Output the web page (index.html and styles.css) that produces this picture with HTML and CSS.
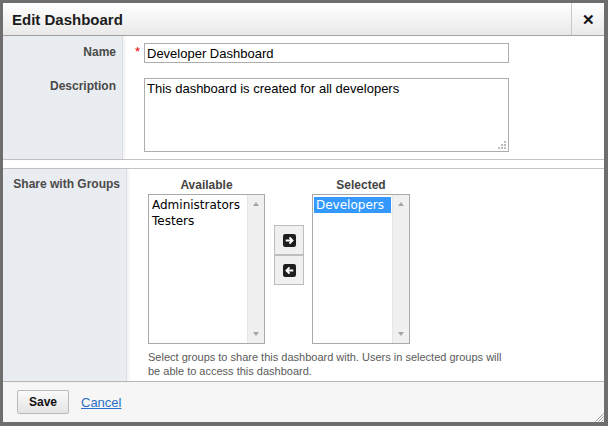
FILE: index.html
```html
<!DOCTYPE html>
<html>
<head>
<meta charset="utf-8">
<link rel="stylesheet" href="styles.css">
</head>
<body>
<div class="dialog">
  <div class="header">
    <div class="title">Edit Dashboard</div>
    <div class="close">&#x2715;</div>
  </div>
  <div class="section s1">
    <div class="labels l1">
      <div class="label name-label">Name</div>
      <div class="label desc-label">Description</div>
    </div>
    <div class="content c1">
      <div class="row">
        <span class="req">*</span>
        <input class="text" type="text" value="Developer Dashboard">
      </div>
      <div class="row desc-row">
        <div class="ta-wrap">
          <textarea class="ta">This dashboard is created for all developers</textarea>
          <svg class="grip" width="9" height="9" viewBox="0 0 9 9">
            <rect x="6" y="0" width="2" height="2" fill="#bbb"/>
            <rect x="3" y="3" width="2" height="2" fill="#bbb"/>
            <rect x="6" y="3" width="2" height="2" fill="#bbb"/>
            <rect x="0" y="6" width="2" height="2" fill="#bbb"/>
            <rect x="3" y="6" width="2" height="2" fill="#bbb"/>
            <rect x="6" y="6" width="2" height="2" fill="#bbb"/>
          </svg>
        </div>
      </div>
    </div>
  </div>
  <div class="spacer"></div>
  <div class="section s2">
    <div class="labels l2">
      <div class="label share-label">Share with Groups</div>
    </div>
    <div class="content c2">
      <div class="picker">
        <div class="col col-avail">
          <div class="col-head">Available</div>
          <div class="list list-avail">
            <div class="items">
              <div class="item">Administrators</div>
              <div class="item">Testers</div>
            </div>
            <div class="sbar"><span class="up"></span><span class="down"></span></div>
          </div>
        </div>
        <div class="moves">
          <div class="mv">
            <svg width="13" height="13" viewBox="0 0 12 12"><rect x="0" y="0" width="12" height="12" rx="2" fill="#1e1e1e"/><path d="M2.5 6H8.5M6 3.2L8.8 6L6 8.8" stroke="#fff" stroke-width="1.7" fill="none"/></svg>
          </div>
          <div class="mv">
            <svg width="13" height="13" viewBox="0 0 12 12"><rect x="0" y="0" width="12" height="12" rx="2" fill="#1e1e1e"/><path d="M9.5 6H3.5M6 3.2L3.2 6L6 8.8" stroke="#fff" stroke-width="1.7" fill="none"/></svg>
          </div>
        </div>
        <div class="col col-sel">
          <div class="col-head">Selected</div>
          <div class="list list-sel">
            <div class="items">
              <div class="item sel">Developers</div>
            </div>
            <div class="sbar"><span class="up"></span><span class="down"></span></div>
          </div>
        </div>
      </div>
      <div class="help">Select groups to share this dashboard with. Users in selected groups will be able to access this dashboard.</div>
    </div>
  </div>
  <div class="footer">
    <button class="save">Save</button>
    <a class="cancel" href="#">Cancel</a>
  </div>
  <svg class="corner" width="10" height="10" viewBox="0 0 10 10">
    <path d="M9.5 1.5L1.5 9.5M9.5 4.5L4.5 9.5M9.5 7.5L7.5 9.5" stroke="#999" stroke-width="1"/>
  </svg>
</div>
</body>
</html>
```
FILE: styles.css
```css
* { box-sizing: border-box; }
html, body { margin: 0; padding: 0; }
body { width: 608px; height: 426px; overflow: hidden; font-family: "Liberation Sans", Arial, sans-serif; background: #6e6e6e; }
.dialog {
  position: relative;
  width: 608px; height: 426px;
  border: 3px solid #6e6e6e;
  border-right-width: 4px;
  border-bottom-width: 4px;
  background: #fff;
  display: flex; flex-direction: column;
}
.header {
  height: 33px; flex: none;
  display: flex;
  background: linear-gradient(#ffffff, #e9e9e9);
  border-bottom: 1px solid #a3a3a3;
}
.title { flex: 1; padding-left: 9px; line-height: 33px; font-size: 15px; font-weight: bold; color: #1c1c1c; }
.close { width: 33px; border-left: 1px solid #c8c8c8; text-align: center; line-height: 33px; font-size: 15px; font-weight: bold; color: #111; }
.section { display: flex; flex: none; }
.s1 { height: 124px; border-bottom: 1px solid #c4c4c4; }
.spacer { height: 8px; flex: none; }
.s2 { height: 213px; border-top: 1px solid #c4c4c4; }
.labels {
  flex: none;
  background: #e9ecf0;
  border-right: 1px solid #d9dce0;
  box-shadow: 2px 0 3px rgba(0,0,0,0.06);
  text-align: right;
  padding-right: 6px;
  position: relative;
}
.l1 { width: 120px; padding-top: 9px; }
.l2 { width: 124px; padding-top: 8px; }
.label { font-size: 12px; font-weight: bold; color: #4a4a4a; }
.name-label { height: 34px; line-height: 14px; }
.desc-label { line-height: 14px; }
.content { flex: 1; }
.c1 { padding: 7px 0 0 12px; }
.row { display: flex; align-items: flex-start; }
.req { color: #e00; font-size: 13px; width: 9px; line-height: 14px; margin-top: 2px; }
.text {
  width: 365px; height: 20px; margin: 0;
  border: 1px solid #adadad; padding: 1px 2px 0;
  font-family: "Liberation Sans", Arial, sans-serif; font-size: 13px; color: #000;
  outline: none;
}
.desc-row { margin-top: 15px; padding-left: 9px; }
.ta-wrap { position: relative; width: 365px; height: 74px; }
.ta {
  display: block; width: 365px; height: 74px; margin: 0;
  border: 1px solid #adadad; padding: 2px 2px;
  font-family: "Liberation Sans", Arial, sans-serif; font-size: 13px; color: #000;
  resize: none; outline: none; line-height: 16px;
}
.grip { position: absolute; right: 2px; bottom: 2px; }
.c2 { padding: 9px 0 0 21px; }
.picker { display: flex; align-items: flex-start; }
.col { display: flex; flex-direction: column; }
.col-head { text-align: center; font-size: 12px; font-weight: bold; color: #444; height: 16px; line-height: 14px; }
.list { display: flex; border: 1px solid #a9a9a9; height: 150px; background: #fff; }
.list-avail { width: 117px; }
.list-sel { width: 98px; }
.items { flex: 1; padding: 2px 1px; font-family: "DejaVu Sans", Verdana, sans-serif; font-size: 12px; color: #000; }
.item { height: 16px; line-height: 16px; padding-left: 2px; }
.item.sel { background: #3399ff; color: #fff; }
.sbar { width: 17px; background: #f0f0f0; border-left: 1px solid #e6e6e6; position: relative; flex: none; }
.up, .down { position: absolute; left: 5px; width: 0; height: 0; border-left: 3.5px solid transparent; border-right: 3.5px solid transparent; }
.up { top: 7px; border-bottom: 4px solid #a6a6a6; }
.down { bottom: 7px; border-top: 4px solid #a6a6a6; }
.moves { margin: 47px 8px 0 9px; display: flex; flex-direction: column; }
.mv {
  width: 30px; height: 30px;
  border: 1px solid #bdbdbd; background: #f0f0f0;
  display: flex; align-items: center; justify-content: center;
}
.mv + .mv { margin-top: 0; }
.help { margin-top: 6px; width: 362px; font-size: 11px; line-height: 14px; color: #5a5a5a; }
.footer {
  flex: 1;
  background: #f6f6f6;
  border-top: 1px solid #b8b8b8;
  display: flex; align-items: center;
  padding-left: 14px;
}
.save {
  width: 52px; height: 24px; margin: 0;
  border: 1px solid #bababa; border-radius: 2px;
  background: linear-gradient(#fafafa, #e4e4e4);
  font-family: "Liberation Sans", Arial, sans-serif; font-size: 12px; font-weight: bold; color: #111;
  padding: 0;
}
.cancel { margin-left: 12px; font-size: 13px; color: #2a6fc9; text-decoration: underline; }
.corner { position: absolute; right: 0; bottom: 0; }
```
